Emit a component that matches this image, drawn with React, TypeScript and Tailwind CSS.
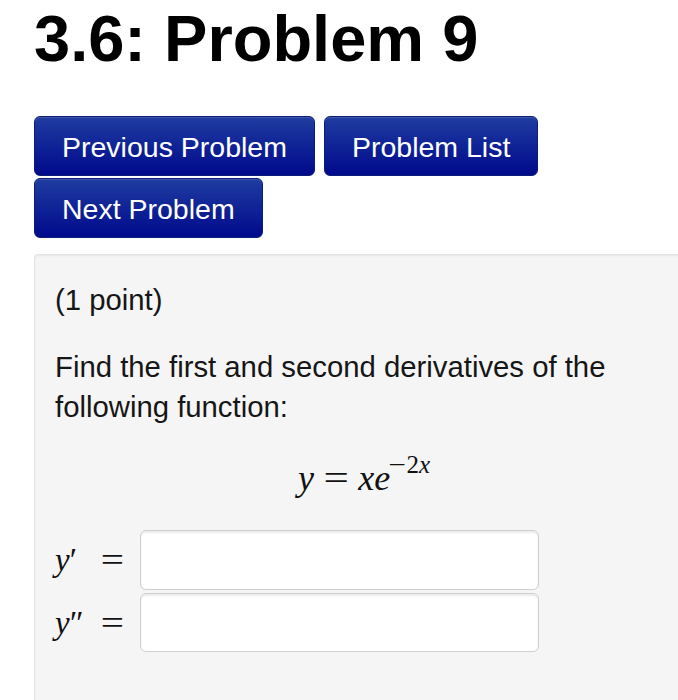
import React from "react";

const btn =
  "h-[60px] px-[27px] pt-[2px] flex items-center rounded-[6px] border border-[#0b1c73] bg-[linear-gradient(to_bottom,#1f3ca0,#000a8c)] text-white text-[28.5px] leading-[40px] shadow-[inset_0_1px_0_rgba(255,255,255,0.15)]";

function Label({ text }: { text: string }) {
  return (
    <div className="w-[85px] h-[60px] flex items-center font-['Liberation_Serif',serif] text-[33px] text-[#111]">
      <span className="italic tracking-[-2px]">{text}</span>
      <span className="ml-auto mr-[18px] inline-block scale-x-125">=</span>
    </div>
  );
}

export default function App() {
  return (
    <div className="w-[678px] h-[700px] overflow-hidden bg-white text-black font-['Liberation_Sans',Arial,sans-serif]">
      <div className="pl-[34px]">
        <h1 className="pt-[4px] text-[65px] font-bold leading-[70px]">3.6: Problem 9</h1>
        <div className="mt-[42px] flex flex-wrap gap-x-[9px] gap-y-[2px] w-[620px]">
          <button className={btn}>Previous Problem</button>
          <button className={btn}>Problem List</button>
          <button className={btn}>Next Problem</button>
        </div>
        <div className="mt-[16px] w-[660px] h-[500px] bg-[#f5f5f5] border border-[#e2e2e2] rounded-[4px] shadow-[inset_0_1px_2px_rgba(0,0,0,0.06)] pt-[25px] px-[20px] text-[29.3px] leading-[40px] text-[#161616]">
          <p>(1 point)</p>
          <p className="mt-[27px]">Find the first and second derivatives of the following function:</p>
          <div className="mt-[31px] h-[40px] leading-[40px] text-center font-['Liberation_Serif',serif] text-[36px] text-[#111]">
            <span className="italic">y</span>
            <span className="inline-block scale-x-125 mx-[12px]">=</span>
            <span className="italic">xe</span>
            <span className="relative -top-[17px] text-[25px]">
              <span className="inline-block scale-x-125 mr-[2px]">−</span>2<span className="italic">x</span>
            </span>
          </div>
          <div className="mt-[32px] flex flex-col gap-[3px]">
            <div className="flex">
              <Label text="y′" />
              <div className="w-[399px] h-[60px] bg-white border border-[#cfcfcf] rounded-[6px] shadow-[inset_0_2px_2px_rgba(0,0,0,0.08)]" />
            </div>
            <div className="flex">
              <Label text="y″" />
              <div className="w-[399px] h-[59px] bg-white border border-[#cfcfcf] rounded-[6px] shadow-[inset_0_2px_2px_rgba(0,0,0,0.08)]" />
            </div>
          </div>
        </div>
      </div>
    </div>
  );
}
